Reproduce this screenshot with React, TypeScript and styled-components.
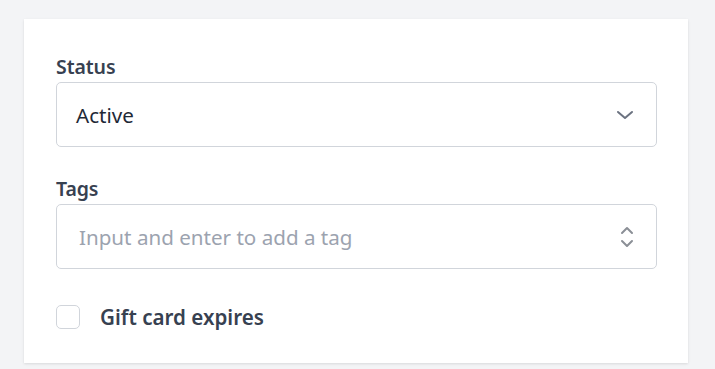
import React from "react";
import styled, { createGlobalStyle } from "styled-components";

const GlobalStyle = createGlobalStyle`
  html, body {
    margin: 0;
    padding: 0;
    background: #f3f4f6;
    font-family: "Noto Sans", "Open Sans", sans-serif;
    -webkit-font-smoothing: antialiased;
  }
  * { box-sizing: border-box; }
`;

const Page = styled.div`
  width: 715px;
  height: 369px;
  padding: 19px 27px 0 24px;
  border-top: 2px solid #f8f9fa;
  margin-top: -2px;
`;

const Card = styled.div`
  width: 664px;
  height: 344px;
  background: #ffffff;
  box-shadow: 0 1px 3px rgba(0, 0, 0, 0.08), 0 1px 2px rgba(0, 0, 0, 0.04);
  padding: 35px 31px 0 32px;
  display: flex;
  flex-direction: column;
`;

const Field = styled.div<{ $gap?: number }>`
  display: flex;
  flex-direction: column;
  gap: 3px;
  margin-bottom: ${(p) => p.$gap ?? 0}px;
`;

const Label = styled.label`
  font-size: 19.5px;
  line-height: 25px;
  font-weight: 600;
  color: #374151;
  letter-spacing: -0.1px;
`;

const Box = styled.div`
  height: 65px;
  border: 1px solid #d1d5db;
  border-radius: 5px;
  display: flex;
  align-items: center;
  justify-content: space-between;
  padding: 0 21px 0 19px;
  background: #fff;
`;

const Value = styled.span<{ $placeholder?: boolean }>`
  font-size: 20.6px;
  color: ${(p) => (p.$placeholder ? "#9ca3af" : "#1f2937")};
  padding-left: ${(p) => (p.$placeholder ? 3 : 0)}px;
`;

const CheckRow = styled.label`
  display: flex;
  align-items: center;
  gap: 20px;
  margin-top: 34px;
`;

const CheckBox = styled.span`
  width: 24px;
  height: 24px;
  border: 1px solid #d1d5db;
  border-radius: 5px;
  background: #fff;
`;

const CheckText = styled.span`
  font-size: 20.6px;
  font-weight: 600;
  color: #374151;
`;

const Chevron = () => (
  <svg width="20" height="20" viewBox="0 0 20 20" fill="none">
    <path d="M3 7l7 6 7-6" stroke="#6b7280" strokeWidth="2" strokeLinecap="round" strokeLinejoin="round" />
  </svg>
);

const UpDown = () => (
  <svg width="16" height="24" viewBox="0 0 16 24" fill="none">
    <path d="M3 8l5-5 5 5" stroke="#8b8f96" strokeWidth="2" strokeLinecap="round" strokeLinejoin="round" />
    <path d="M3 16l5 5 5-5" stroke="#8b8f96" strokeWidth="2" strokeLinecap="round" strokeLinejoin="round" />
  </svg>
);

export default function App() {
  return (
    <>
      <GlobalStyle />
      <Page>
        <Card>
          <Field $gap={29}>
            <Label>Status</Label>
            <Box>
              <Value>Active</Value>
              <Chevron />
            </Box>
          </Field>
          <Field>
            <Label>Tags</Label>
            <Box>
              <Value $placeholder>Input and enter to add a tag</Value>
              <UpDown />
            </Box>
          </Field>
          <CheckRow>
            <CheckBox />
            <CheckText>Gift card expires</CheckText>
          </CheckRow>
        </Card>
      </Page>
    </>
  );
}
